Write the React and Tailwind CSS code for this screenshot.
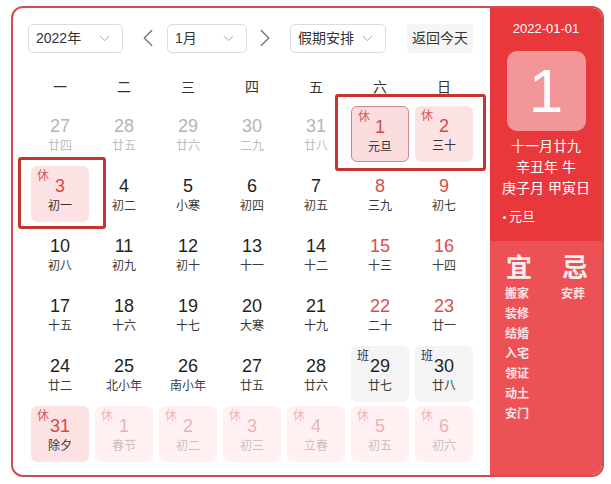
import React from 'react';
import { ChevronDown, ChevronLeft, ChevronRight } from 'lucide-react';

const WEEK = ['一', '二', '三', '四', '五', '六', '日'];

// kind: prev | normal | weekend | holiday | selected | work | nextHoliday
const DAYS = [
  [27, '廿四', 'prev'], [28, '廿五', 'prev'], [29, '廿六', 'prev'], [30, '二九', 'prev'], [31, '廿八', 'prev'], [1, '元旦', 'selected'], [2, '三十', 'holiday'],
  [3, '初一', 'holiday'], [4, '初二', 'normal'], [5, '小寒', 'normal'], [6, '初四', 'normal'], [7, '初五', 'normal'], [8, '三九', 'weekend'], [9, '初七', 'weekend'],
  [10, '初八', 'normal'], [11, '初九', 'normal'], [12, '初十', 'normal'], [13, '十一', 'normal'], [14, '十二', 'normal'], [15, '十三', 'weekend'], [16, '十四', 'weekend'],
  [17, '十五', 'normal'], [18, '十六', 'normal'], [19, '十七', 'normal'], [20, '大寒', 'normal'], [21, '十九', 'normal'], [22, '二十', 'weekend'], [23, '廿一', 'weekend'],
  [24, '廿二', 'normal'], [25, '北小年', 'normal'], [26, '南小年', 'normal'], [27, '廿五', 'normal'], [28, '廿六', 'normal'], [29, '廿七', 'work'], [30, '廿八', 'work'],
  [31, '除夕', 'holiday'], [1, '春节', 'nextHoliday'], [2, '初二', 'nextHoliday'], [3, '初三', 'nextHoliday'], [4, '立春', 'nextHoliday'], [5, '初五', 'nextHoliday'], [6, '初六', 'nextHoliday'],
];

const YI = ['搬家', '装修', '结婚', '入宅', '领证', '动土', '安门'];

const cellStyles = {
  prev: { box: '', num: 'text-[#b5b5b5]', lunar: 'text-[#bdbdbd]' },
  normal: { box: '', num: 'text-[#1f1f1f]', lunar: 'text-[#3a3a3a]' },
  weekend: { box: '', num: 'text-[#d5504c]', lunar: 'text-[#3a3a3a]' },
  holiday: { box: 'bg-[#fde2e4]', num: 'text-[#d24a4a]', lunar: 'text-[#333]', tag: '休', tagCls: 'text-[#d45a5a]' },
  selected: { box: 'bg-[#fbdcdf] border-[1.5px] border-[#c98888]', num: 'text-[#d24a4a]', lunar: 'text-[#333]', tag: '休', tagCls: 'text-[#d45a5a]' },
  work: { box: 'bg-[#f4f4f5]', num: 'text-[#1f1f1f]', lunar: 'text-[#3a3a3a]', tag: '班', tagCls: 'text-[#333]' },
  nextHoliday: { box: 'bg-[#fff1f2]', num: 'text-[#eab3b7]', lunar: 'text-[#c9bfc0]', tag: '休', tagCls: 'text-[#ebb5b9]' },
};

const Select = ({ label, width }) => (
  <div
    className={`${width} h-[29px] flex items-center justify-between pl-[7px] pr-[9px] border border-[#dcdcdc] rounded-[5px] text-[14px] text-[#333]`}
  >
    <span>{label}</span>
    <ChevronDown className="w-[17px] h-[17px] text-[#a0a0a0]" strokeWidth={1.3} />
  </div>
);

const DayCell = ({ day }) => {
  const [num, lunar, kind] = day;
  const s = cellStyles[kind];
  return (
    <div className={`relative h-[56px] rounded-[6px] flex flex-col items-center pt-[9px] ${s.box}`}>
      {s.tag && (
        <span className={`absolute left-[6px] top-[2px] text-[12px] leading-[16px] ${s.tagCls}`}>{s.tag}</span>
      )}
      <span className={`text-[18px] leading-[22px] ${s.num}`}>{num}</span>
      <span className={`mt-[1px] text-[12px] leading-[16px] ${s.lunar}`}>{lunar}</span>
    </div>
  );
};

export default function App() {
  return (
    <div
      className="relative w-[611px] h-[484px] bg-white pt-[6px] pl-[11px]"
      style={{ fontFamily: '"Liberation Sans", "Noto Sans CJK SC", sans-serif' }}
    >
      <div className="w-[593px] h-[471px] border-2 border-[#c9514e] rounded-[12px] overflow-hidden flex">
        {/* 左侧日历 */}
        <div className="flex-1 pl-[15px] pt-[15px]">
          <div className="flex items-center">
            <Select label="2022年" width="w-[95px]" />
            <ChevronLeft className="ml-[10px] w-[30px] h-[30px] text-[#777]" strokeWidth={1.1} />
            <div className="ml-[4px]">
              <Select label="1月" width="w-[80px]" />
            </div>
            <ChevronRight className="ml-[3px] w-[30px] h-[30px] text-[#777]" strokeWidth={1.1} />
            <div className="ml-[10px]">
              <Select label="假期安排" width="w-[96px]" />
            </div>
            <div className="ml-[21px] w-[66px] h-[29px] flex items-center justify-center bg-[#f5f5f5] rounded-[4px] text-[14px] text-[#333]">
              返回今天
            </div>
          </div>

          <div className="ml-[3px] mt-[24px] w-[442px] grid grid-cols-7 gap-x-[6px]">
            {WEEK.map(w => (
              <div key={w} className="text-center text-[14px] leading-[20px] text-[#333]">{w}</div>
            ))}
          </div>

          <div className="ml-[3px] mt-[9px] w-[442px] grid grid-cols-7 gap-x-[6px] gap-y-[4px]">
            {DAYS.map((d, i) => (
              <DayCell key={i} day={d} />
            ))}
          </div>
        </div>

        {/* 右侧详情 */}
        <div className="w-[112px] flex flex-col text-white">
          <div className="h-[233px] bg-[#e8383b] flex flex-col items-center pt-[12px]">
            <div className="text-[13px] leading-[18px]">2022-01-01</div>
            <div className="mt-[13px] w-[79px] h-[80px] rounded-[10px] bg-[#f29697] flex items-center justify-center text-[62px] leading-none font-light">
              1
            </div>
            <div className="mt-[5px] text-[14px] leading-[21px] text-center">
              <div>十一月廿九</div>
              <div>辛丑年 牛</div>
              <div>庚子月 甲寅日</div>
            </div>
            <div className="self-start ml-[13px] mt-[9px] text-[13px] leading-[18px] flex items-center">
              <span className="w-[3px] h-[3px] bg-white rounded-full mr-[3px]" />
              元旦
            </div>
          </div>
          <div className="flex-1 bg-[#ec5155] flex pl-[15px] pt-[12px]">
            <div className="w-[56px] flex flex-col items-start">
              <div className="text-[26px] leading-[30px] font-bold text-[#fdeeee] ml-[1px]">宜</div>
              <div className="mt-[1px] flex flex-col text-[12px] leading-[20px] font-bold text-[#fde3e3]">
                {YI.map(y => (
                  <span key={y}>{y}</span>
                ))}
              </div>
            </div>
            <div className="flex flex-col items-start">
              <div className="text-[26px] leading-[30px] font-bold text-[#fdeeee] ml-[1px]">忌</div>
              <div className="mt-[1px] text-[12px] leading-[20px] font-bold text-[#fde3e3]">安葬</div>
            </div>
          </div>
        </div>
      </div>

      {/* 标注框 */}
      <div className="absolute left-[335px] top-[94px] w-[151px] h-[77px] border-[3px] border-[#c8322f] rounded-[3px]" />
      <div className="absolute left-[18px] top-[157px] w-[88px] h-[72px] border-[3px] border-[#c8322f] rounded-[3px]" />
    </div>
  );
}
